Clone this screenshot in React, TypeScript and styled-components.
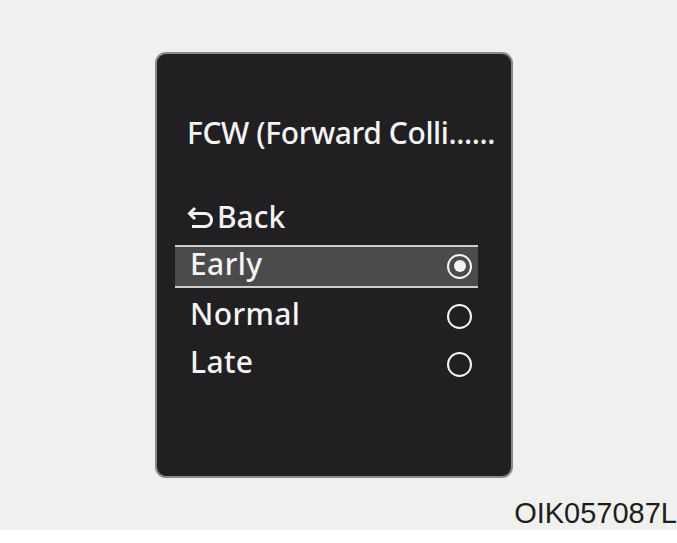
import styled, { createGlobalStyle } from "styled-components";

const GlobalStyle = createGlobalStyle`
  html, body {
    margin: 0;
    padding: 0;
    background: #ffffff;
  }
`;

const Page = styled.div`
  display: flex;
  flex-direction: column;
  width: 677px;
  height: 530px;
  padding-top: 52px;
  box-sizing: border-box;
  background: #f0f0ef;
  overflow: hidden;
`;

const Screen = styled.div`
  display: flex;
  flex-direction: column;
  width: 358px;
  height: 428px;
  margin-left: 155px;
  padding: 61px 33px 0 18px;
  box-sizing: border-box;
  background: #211f22;
  border: 2px solid #8a8a8a;
  border-radius: 11px;
  font-family: "Noto Sans", sans-serif;
  font-size: 30px;
  font-weight: 500;
  line-height: 36px;
  color: #f4f4f4;
`;

const Title = styled.div`
  padding-left: 12px;
  white-space: nowrap;
  letter-spacing: -0.4px;
`;

const Menu = styled.div`
  display: flex;
  flex-direction: column;
  margin-top: 43px;
`;

const BackRow = styled.div`
  display: flex;
  align-items: center;
  gap: 4px;
  height: 48px;
  padding-left: 12px;
  padding-bottom: 3px;
  box-sizing: border-box;
`;

const OptionRow = styled.div<{ $selected?: boolean }>`
  display: flex;
  align-items: center;
  justify-content: space-between;
  height: ${(p) => (p.$selected ? "43px" : "48px")};
  margin-top: ${(p) => (p.$selected ? "3px" : "0")};
  margin-bottom: ${(p) => (p.$selected ? "3px" : "0")};
  padding: ${(p) => (p.$selected ? "0 6px 5px 15px" : "0 6px 2px 15px")};
  box-sizing: border-box;
  background: ${(p) => (p.$selected ? "#4b4b4b" : "transparent")};
  border-top: ${(p) => (p.$selected ? "2px solid #cfcfcf" : "none")};
  border-bottom: ${(p) => (p.$selected ? "2px solid #cfcfcf" : "none")};
`;

const Label = styled.span`
  letter-spacing: 0.4px;
`;

const Radio = styled.span<{ $on?: boolean }>`
  display: flex;
  align-items: center;
  justify-content: center;
  width: 25px;
  height: 25px;
  margin-top: 4px;
  box-sizing: border-box;
  border: 2.5px solid #f4f4f4;
  border-radius: 50%;

  &::after {
    content: "";
    display: ${(p) => (p.$on ? "block" : "none")};
    width: 12px;
    height: 12px;
    border-radius: 50%;
    background: #f4f4f4;
  }
`;

const Caption = styled.div`
  align-self: flex-end;
  margin-top: 19px;
  font-family: "Liberation Sans", Arial, sans-serif;
  font-size: 29px;
  line-height: 33px;
  color: #1e1e1e;
  white-space: nowrap;
`;

const BackIcon = () => (
  <svg width="26" height="24" viewBox="0 0 26 24" fill="none">
    <path
      d="M8 3 L2.5 8.5 L8 14 M3 8.5 H18 A6.5 6.5 0 0 1 18 21.5 H5"
      stroke="#f4f4f4"
      strokeWidth="3"
      strokeLinecap="butt"
      strokeLinejoin="miter"
    />
  </svg>
);

const options = ["Early", "Normal", "Late"];

export default function App() {
  const selected = "Early";
  return (
    <>
      <GlobalStyle />
      <Page>
        <Screen>
          <Title>FCW (Forward Colli......</Title>
          <Menu>
            <BackRow>
              <BackIcon />
              <span>Back</span>
            </BackRow>
            {options.map((o) => (
              <OptionRow key={o} $selected={o === selected}>
                <Label>{o}</Label>
                <Radio $on={o === selected} />
              </OptionRow>
            ))}
          </Menu>
        </Screen>
        <Caption>OIK057087L</Caption>
      </Page>
    </>
  );
}
